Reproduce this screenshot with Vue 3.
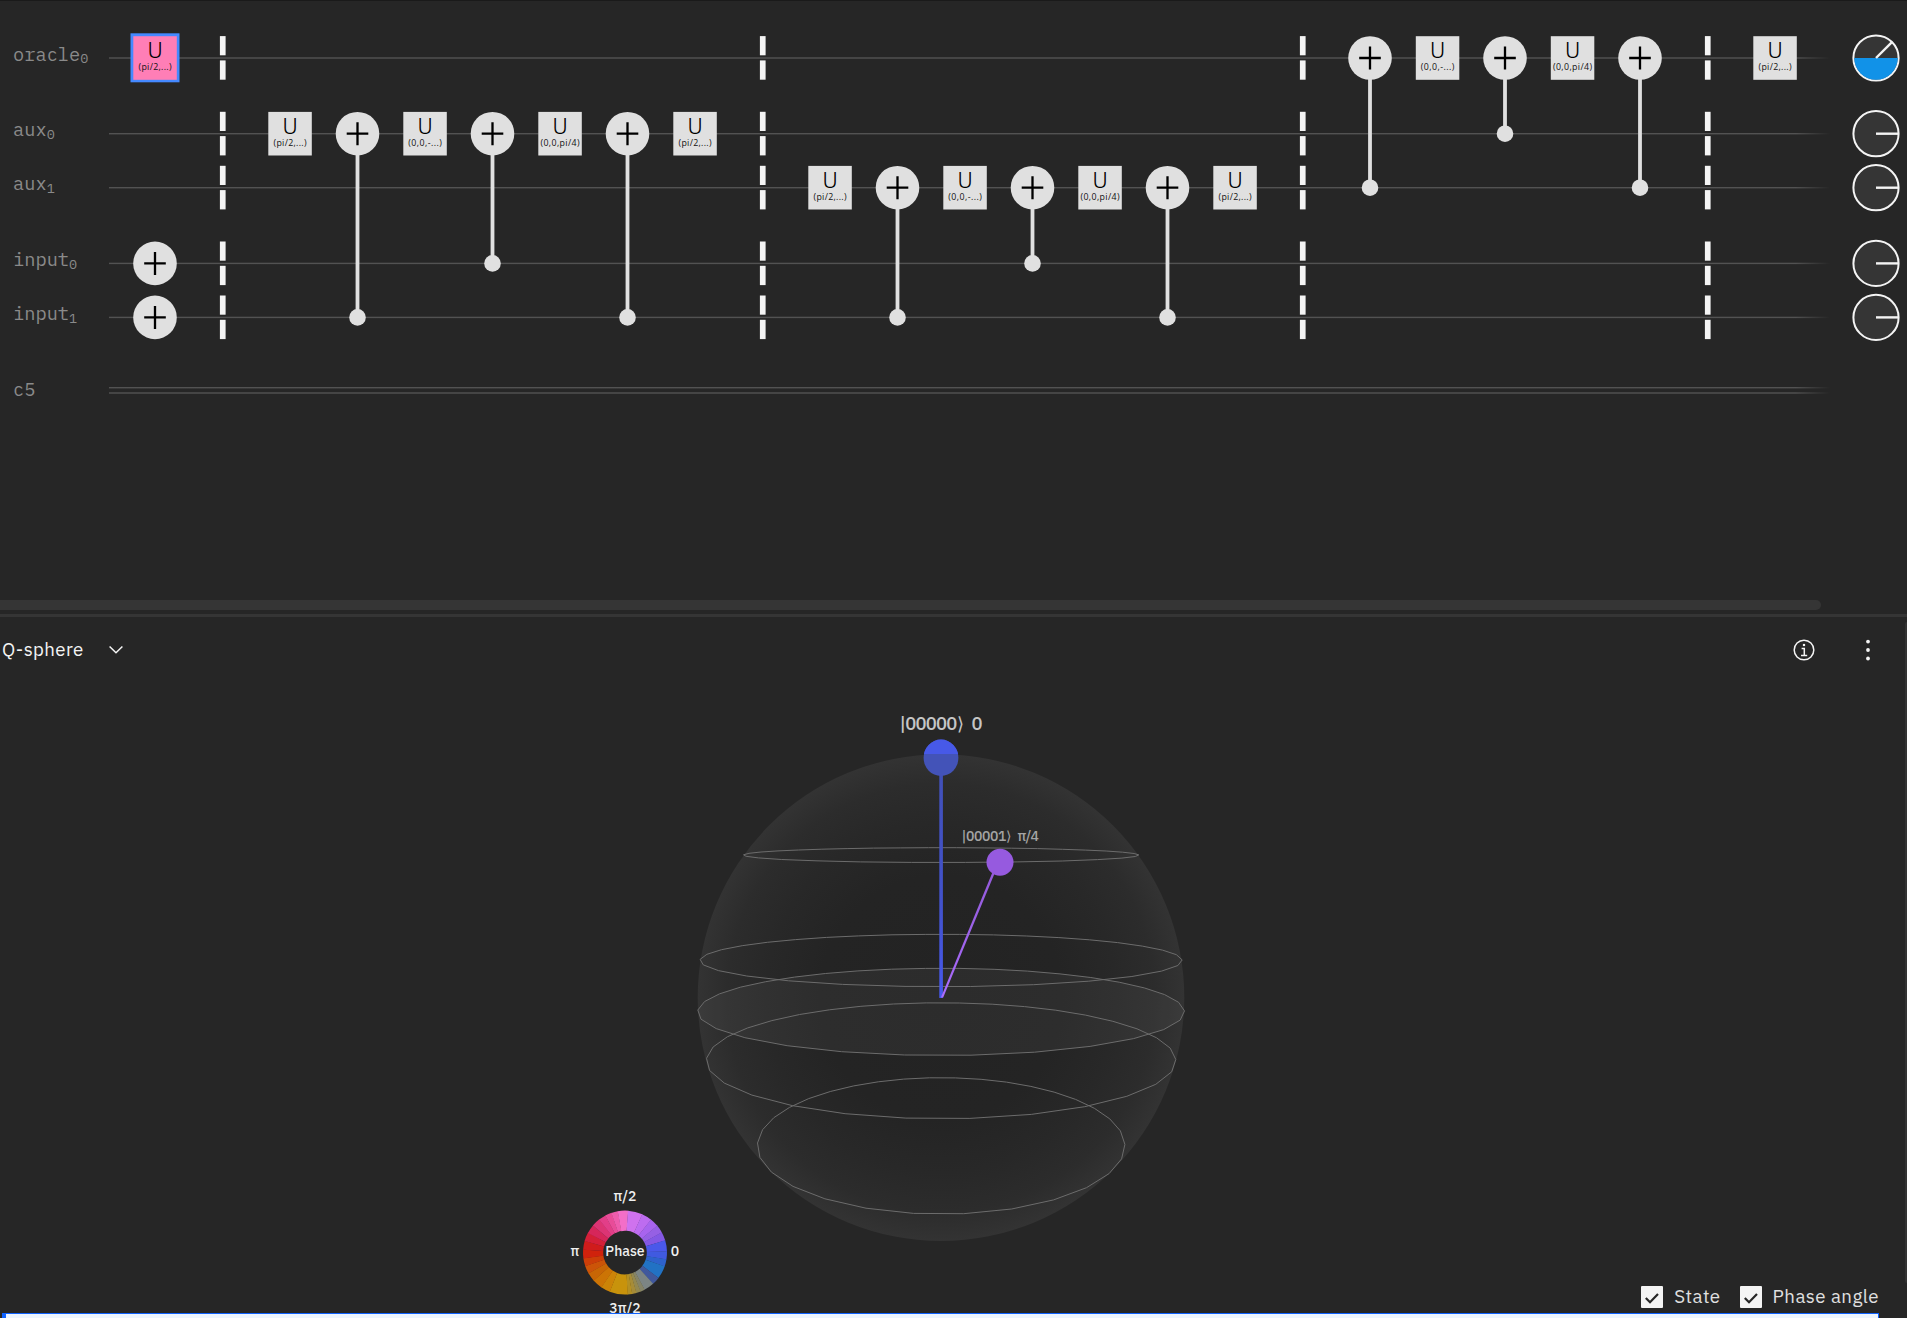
<script setup>
const wires = [58, 133.7, 187.7, 263.4, 317.4]
const labels = [
  { y: 60.5, name: 'oracle', sub: '0' },
  { y: 136, name: 'aux', sub: '0' },
  { y: 190, name: 'aux', sub: '1' },
  { y: 266, name: 'input', sub: '0' },
  { y: 320, name: 'input', sub: '1' },
  { y: 395.5, name: 'c5', sub: '' },
]
const PITCH = 67.5
const colX = (c) => 155 + c * PITCH

const barriers = [1, 9, 17, 23]
const A = '(pi/2,...)'
const B = '(0,0,-...)'
const C = '(0,0,pi/4)'
const argWidth = { [A]: 33, [B]: 33.5, [C]: 39 }

const uGates = [
  { c: 0, w: 0, t: A, selected: true },
  { c: 2, w: 1, t: A }, { c: 4, w: 1, t: B }, { c: 6, w: 1, t: C }, { c: 8, w: 1, t: A },
  { c: 10, w: 2, t: A }, { c: 12, w: 2, t: B }, { c: 14, w: 2, t: C }, { c: 16, w: 2, t: A },
  { c: 19, w: 0, t: B }, { c: 21, w: 0, t: C }, { c: 24, w: 0, t: A },
]
const xGates = [
  { c: 0, w: 3 }, { c: 0, w: 4 },
  { c: 3, w: 1, ctl: 4 }, { c: 5, w: 1, ctl: 3 }, { c: 7, w: 1, ctl: 4 },
  { c: 11, w: 2, ctl: 4 }, { c: 13, w: 2, ctl: 3 }, { c: 15, w: 2, ctl: 4 },
  { c: 18, w: 0, ctl: 2 }, { c: 20, w: 0, ctl: 1 }, { c: 22, w: 0, ctl: 2 },
]

const ring = (rx, top, bottom) => {
  const cy = (top + bottom) / 2
  const ry = (bottom - top) / 2
  const k = 0.32
  const pts = []
  for (let i = 0; i < 32; i++) {
    const t = ((i + 0.55) * 11.25 * Math.PI) / 180
    const d = 1 - k * Math.sin(t)
    const x = 941.1 + (rx * Math.sqrt(1 - k * k) * Math.cos(t)) / d
    const y = cy + (ry * (Math.sin(t) - k)) / d
    pts.push(`${x.toFixed(1)},${y.toFixed(1)}`)
  }
  return pts.join(' ')
}
const rings = [
  ring(197.8, 847.7, 862.5),
  ring(241.2, 934.3, 986.7),
  ring(243.5, 968.3, 1055.5),
  ring(234.8, 1002.8, 1118.8),
  ring(183.8, 1077.7, 1214.2),
]

// Phase wheel: clockwise from the top, [end angle, colour]
const wheelStops = [
  [4, '#f070c8'], [24, '#cf72ee'], [38, '#bd6cf0'], [50, '#a864ee'], [61, '#9660e4'], [73, '#8458e4'],
  [88, '#4a58ea'], [99, '#405ae0'], [109, '#2e62cc'], [127, '#2272c4'], [138, '#40589c'],
  [152, '#7c8584'], [158, '#858468'], [164, '#938850'], [170, '#a68c38'], [176, '#b49024'], [201, '#c8930c'],
  [214, '#cc8408'], [228, '#cc7405'], [240, '#c86605'], [251, '#cc5408'], [262, '#cc3e08'],
  [274, '#d0220c'], [286, '#d01c1c'], [298, '#d41f38'], [310, '#d6265a'], [322, '#dc3474'],
  [332, '#e23e88'], [341, '#e84c98'], [350, '#ee5cac'], [360, '#f46ec8'],
]
const polar = (r, a) => {
  const t = (a * Math.PI) / 180
  return `${(625 + r * Math.sin(t)).toFixed(2)} ${(1252.6 - r * Math.cos(t)).toFixed(2)}`
}
const wheel = wheelStops.map(([end, fill], i) => {
  const a = i ? wheelStops[i - 1][0] : 0
  const b = Math.min(end + 0.4, 360)
  return { fill, d: `M${polar(42, a)}A42 42 0 0 1 ${polar(42, b)}L${polar(21.8, b)}A21.8 21.8 0 0 0 ${polar(21.8, a)}Z` }
})
</script>

<template>
  <main class="app">
    <section class="circuit">
      <svg width="1907" height="599" viewBox="0 1 1907 599">
        <defs>
          <linearGradient id="fade" gradientUnits="userSpaceOnUse" x1="109" y1="0" x2="1830" y2="0">
            <stop offset="0" stop-color="#525252" />
            <stop offset="0.98" stop-color="#525252" />
            <stop offset="1" stop-color="#525252" stop-opacity="0" />
          </linearGradient>
        </defs>

        <g class="labels">
          <text v-for="l in labels" :key="l.y" x="13" :y="l.y">{{ l.name }}<tspan class="sub" dy="2.5">{{ l.sub }}</tspan></text>
        </g>

        <rect v-for="y in wires" :key="y" x="109" :y="y - 0.7" width="1721" height="1.4" fill="url(#fade)" />
        <rect x="109" y="387" width="1721" height="1.4" fill="url(#fade)" />
        <rect x="109" y="392.3" width="1721" height="1.4" fill="url(#fade)" />

        <g class="barrier">
          <template v-for="b in barriers" :key="b">
            <template v-for="y in wires" :key="y">
              <rect :x="colX(b) - 2.6" :y="y - 21.9" width="5.7" height="19.2" />
              <rect :x="colX(b) - 2.6" :y="y + 2.4" width="5.7" height="19.3" />
            </template>
          </template>
        </g>

        <g v-for="g in xGates" :key="g.c + '-' + g.w" class="x-gate">
          <template v-if="g.ctl">
            <line class="link" :x1="colX(g.c)" :x2="colX(g.c)" :y1="wires[g.w]" :y2="wires[g.ctl]" />
            <circle :cx="colX(g.c)" :cy="wires[g.ctl]" r="8.3" />
          </template>
          <circle :cx="colX(g.c)" :cy="wires[g.w]" r="21.8" />
          <path class="plus" :d="`M${colX(g.c) - 10.8} ${wires[g.w]}h21.6M${colX(g.c)} ${wires[g.w] - 11.5}v23`" />
        </g>

        <g v-for="g in uGates" :key="'u' + g.c" class="u-gate" :class="{ selected: g.selected }">
          <rect v-if="g.selected" class="halo" :x="colX(g.c) - 24.5" :y="wires[g.w] - 24.7" width="49" height="49" />
          <rect class="body" :x="colX(g.c) - 21.7" :y="wires[g.w] - 21.8" width="43.5" height="43.6" />
          <text class="u" :x="colX(g.c)" :y="wires[g.w] - 0.2">U</text>
          <text class="args" :x="colX(g.c) - argWidth[g.t] / 2" :y="wires[g.w] + 11.9" :textLength="argWidth[g.t]">{{ g.t }}</text>
        </g>

        <g v-for="(y, i) in wires" :key="'m' + i" class="meter">
          <circle cx="1876" :cy="y" r="22.6" />
          <path v-if="i === 0" class="fill" :d="`M1854.2 ${y}h43.6a21.8 21.8 0 0 1 -43.6 0z`" />
          <path v-if="i === 0" class="needle" :d="`M1876 ${y}L1892.2 ${y - 16.2}`" />
          <path v-else class="needle" :d="`M1876 ${y}h22`" />
        </g>
      </svg>
    </section>

    <div class="scrollbar"></div>
    <div class="divider"></div>

    <section class="panel">
      <header class="panel-head">
        <span class="title">Q-sphere</span>
        <svg class="chevron" width="16" height="12" viewBox="0 0 16 12"><path d="M1.6 2.5L8 8.8L14.4 2.5" /></svg>
        <svg class="info" width="24" height="24" viewBox="0 0 24 24">
          <circle cx="12" cy="12" r="9.8" />
          <path d="M9.6 10.4h2.7v7M9 17.4h6.2" />
          <rect x="10.9" y="5.9" width="2.2" height="2.2" />
        </svg>
        <svg class="more" width="8" height="24" viewBox="0 0 8 24">
          <circle cx="4" cy="3.6" r="1.9" /><circle cx="4" cy="12" r="1.9" /><circle cx="4" cy="20.5" r="1.9" />
        </svg>
      </header>

      <div class="stage">
        <svg width="1905" height="631" viewBox="0 682 1905 631">
          <defs>
            <radialGradient id="glass">
              <stop offset="0" stop-color="#232323" />
              <stop offset="0.5" stop-color="#242424" />
              <stop offset="0.72" stop-color="#282828" />
              <stop offset="0.88" stop-color="#2c2c2c" />
              <stop offset="1" stop-color="#333333" />
            </radialGradient>
            <linearGradient id="stem" x1="0" y1="0" x2="0" y2="1">
              <stop offset="0" stop-color="#4150b8" />
              <stop offset="0.6" stop-color="#4252cc" />
              <stop offset="1" stop-color="#4759ee" />
            </linearGradient>
            <linearGradient id="stem2" x1="0" y1="0" x2="0" y2="1">
              <stop offset="0" stop-color="#945ada" />
              <stop offset="0.45" stop-color="#9c62e8" />
              <stop offset="1" stop-color="#ac6cff" />
            </linearGradient>
            <clipPath id="above"><rect x="900" y="730" width="80" height="24" /></clipPath>
          </defs>

          <circle cx="941" cy="997.6" r="243.3" fill="url(#glass)" />
          <polygon class="disc" :points="rings[2]" />
          <polygon v-for="(r, i) in rings" :key="i" class="ring" :points="r" />

          <rect x="939.3" y="770" width="3.6" height="228" fill="url(#stem)" />
          <path d="M996 870L943.2 997.6H940.9L993.4 870Z" fill="url(#stem2)" />
          <ellipse cx="941" cy="757.8" rx="17.4" ry="18.2" fill="#4353b8" />
          <ellipse cx="941" cy="757.8" rx="17.4" ry="18.2" fill="#4759e8" clip-path="url(#above)" />
          <circle cx="1000" cy="862.2" r="13.5" fill="#965adf" />

          <g class="ket big">
            <text x="899.5" y="730" textLength="64">|00000⟩</text>
            <text x="971.6" y="730">0</text>
          </g>
          <g class="ket small">
            <text x="961.5" y="840.6" textLength="49.5">|00001⟩</text>
            <text x="1017.4" y="840.6" textLength="21.6">π/4</text>
          </g>

          <path v-for="(s, i) in wheel" :key="'w' + i" :d="s.d" :fill="s.fill" />
          <g class="phase">
            <text x="625" y="1256.3">Phase</text>
            <text x="625" y="1201.2">π/2</text>
            <text x="575" y="1256.3">π</text>
            <text x="675" y="1256.3">0</text>
            <text x="625" y="1313.3">3π/2</text>
          </g>
        </svg>
        <div class="options">
          <label v-for="o in ['State', 'Phase angle']" :key="o" class="option">
            <span class="box"><svg width="22" height="22" viewBox="0 0 22 22"><path d="M4.8 12L9 16.2L17 8" /></svg></span>
            <span>{{ o }}</span>
          </label>
        </div>
      </div>
      <div class="edge"></div>
    </section>

    <footer class="next"><div class="selection"></div></footer>
  </main>
</template>

<style>
body {
  margin: 0;
  background: #262626;
  overflow: hidden;
}
</style>

<style scoped>
.app {
  display: flex;
  flex-direction: column;
  width: 1907px;
  height: 1318px;
  overflow: hidden;
  background: #262626;
  color: #f4f4f4;
  font-family: "IBM Plex Sans", Roboto, "Liberation Sans", sans-serif;
}
svg { display: block; }
.circuit { height: 599px; border-top: 1px solid #1a1a1a; }
.labels text { font: 18.7px "IBM Plex Mono", "Liberation Mono", monospace; fill: #8a8a8a; }
.labels .sub { font-size: 13.5px; }
.barrier rect { fill: #f4f4f4; }
.x-gate circle { fill: #e0e0e0; }
.x-gate .link { stroke: #e0e0e0; stroke-width: 3.8; }
.x-gate .plus { stroke: #000; stroke-width: 2.3; fill: none; }
.u-gate .body { fill: #e0e0e0; }
.u-gate.selected .body { fill: #ff7eb6; }
.halo { fill: #4589ff; }
.u { font-size: 23.5px; font-weight: 300; text-anchor: middle; fill: #000; }
.args { font-family: "Open Sans", sans-serif; font-size: 8.8px; fill: #111; }
.meter circle { fill: #353535; stroke: #f4f4f4; stroke-width: 2; }
.meter .fill { fill: #1192e8; }
.meter .needle { stroke: #f4f4f4; stroke-width: 2.4; }

.scrollbar { flex: none; width: 1821px; height: 10px; background: #353535; border-radius: 0 5px 5px 0; }
.divider { flex: none; height: 3px; margin-top: 4px; background: #353535; }

.panel { display: grid; grid-template: 65px 631px / 1905px 2px; height: 696px; flex: none; }
.panel-head { display: flex; align-items: center; }
.title { width: 105px; padding-left: 2px; font-size: 18.7px; letter-spacing: 0.35px; line-height: 24px; margin-top: -2px; }
.chevron { margin-left: 1px; }
.chevron path { fill: none; stroke: #f4f4f4; stroke-width: 1.5; }
.info { margin-left: auto; }
.info circle, .info path { fill: none; stroke: #f4f4f4; stroke-width: 1.5; }
.info rect, .more circle { fill: #f4f4f4; }
.more { margin: 0 33px 0 48px; }
.stage { position: relative; grid-row: 2; height: 631px; }
.edge { grid-column: 2; grid-row: 1 / 3; margin: 5px 0 30px; background: #333; border-radius: 2px 0 0 2px; }
.disc { fill: #fff; fill-opacity: 0.045; }
.ring { fill: none; stroke: #6c6c6c; stroke-width: 1; }
.ket { fill: #c6c6c6; font-weight: 500; }
.ket.big { font-size: 18.4px; }
.ket.small { font-size: 14px; fill: #a4a4a4; }
.phase { font-size: 14px; font-weight: 500; fill: #f0f0f0; text-anchor: middle; }

.options { position: absolute; right: 26px; bottom: 5px; display: flex; gap: 19px; }
.option { display: flex; align-items: center; gap: 11px; height: 22px; font-size: 18.7px; letter-spacing: 0.45px; color: #e0e0e0; }
.option > span:last-child { margin-top: -3px; }
.box { width: 22px; height: 22px; background: #f4f4f4; border-radius: 1px; }
.box path { fill: none; stroke: #262626; stroke-width: 2.2; }

.next { height: 5px; padding: 0 28px 0 2px; }
.selection { height: 10px; background: #edf5ff; border: 1px solid #0f62fe; border-left-width: 4px; }
</style>
